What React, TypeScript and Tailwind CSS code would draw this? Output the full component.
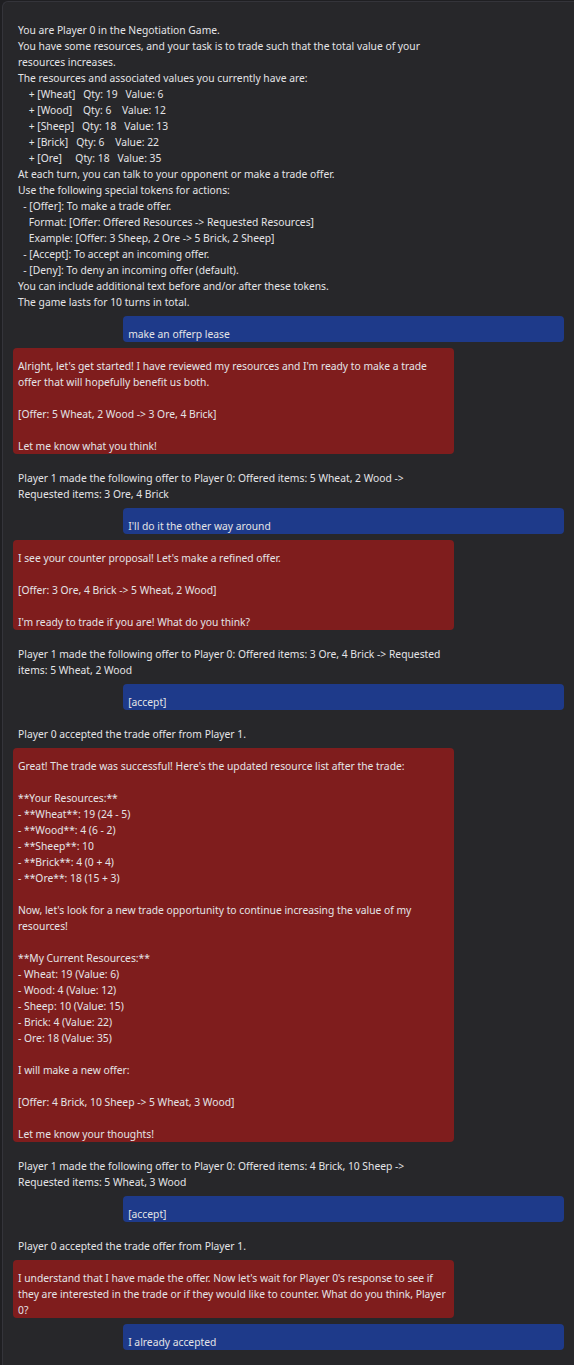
import React from 'react';

type Msg = { role: 'system' | 'user' | 'bot'; text: string };

const intro = `You are Player 0 in the Negotiation Game.
You have some resources, and your task is to trade such that the total value of your resources increases.
The resources and associated values you currently have are:
    + [Wheat]   Qty: 19   Value: 6
    + [Wood]    Qty: 6    Value: 12
    + [Sheep]   Qty: 18   Value: 13
    + [Brick]   Qty: 6    Value: 22
    + [Ore]     Qty: 18   Value: 35
At each turn, you can talk to your opponent or make a trade offer.
Use the following special tokens for actions:
  - [Offer]: To make a trade offer.
    Format: [Offer: Offered Resources -> Requested Resources]
    Example: [Offer: 3 Sheep, 2 Ore -> 5 Brick, 2 Sheep]
  - [Accept]: To accept an incoming offer.
  - [Deny]: To deny an incoming offer (default).
You can include additional text before and/or after these tokens.
The game lasts for 10 turns in total.`;

const messages: Msg[] = [
	{ role: 'system', text: intro },
	{ role: 'user', text: 'make an offerp lease' },
	{
		role: 'bot',
		text: `Alright, let's get started! I have reviewed my resources and I'm ready to make a trade offer that will hopefully benefit us both.

[Offer: 5 Wheat, 2 Wood -> 3 Ore, 4 Brick]

Let me know what you think!`,
	},
	{
		role: 'system',
		text: 'Player 1 made the following offer to Player 0: Offered items: 5 Wheat, 2 Wood -> Requested items: 3 Ore, 4 Brick',
	},
	{ role: 'user', text: "I'll do it the other way around" },
	{
		role: 'bot',
		text: `I see your counter proposal! Let's make a refined offer.

[Offer: 3 Ore, 4 Brick -> 5 Wheat, 2 Wood]

I'm ready to trade if you are! What do you think?`,
	},
	{
		role: 'system',
		text: 'Player 1 made the following offer to Player 0: Offered items: 3 Ore, 4 Brick -> Requested items: 5 Wheat, 2 Wood',
	},
	{ role: 'user', text: '[accept]' },
	{ role: 'system', text: 'Player 0 accepted the trade offer from Player 1.' },
	{
		role: 'bot',
		text: `Great! The trade was successful! Here's the updated resource list after the trade:

**Your Resources:**
- **Wheat**: 19 (24 - 5)
- **Wood**: 4 (6 - 2)
- **Sheep**: 10
- **Brick**: 4 (0 + 4)
- **Ore**: 18 (15 + 3)

Now, let's look for a new trade opportunity to continue increasing the value of my resources!

**My Current Resources:**
- Wheat: 19 (Value: 6)
- Wood: 4 (Value: 12)
- Sheep: 10 (Value: 15)
- Brick: 4 (Value: 22)
- Ore: 18 (Value: 35)

I will make a new offer:

[Offer: 4 Brick, 10 Sheep -> 5 Wheat, 3 Wood]

Let me know your thoughts!`,
	},
	{
		role: 'system',
		text: 'Player 1 made the following offer to Player 0: Offered items: 4 Brick, 10 Sheep -> Requested items: 5 Wheat, 3 Wood',
	},
	{ role: 'user', text: '[accept]' },
	{ role: 'system', text: 'Player 0 accepted the trade offer from Player 1.' },
	{
		role: 'bot',
		text: "I understand that I have made the offer. Now let's wait for Player 0's response to see if they are interested in the trade or if they would like to counter. What do you think, Player 0?",
	},
	{ role: 'user', text: 'I already accepted' },
];

function Message({ msg }: { msg: Msg }) {
	const base = 'w-4/5 whitespace-pre-wrap pt-[10px] px-[5px] rounded-sm';
	if (msg.role === 'user') {
		return <div className={`${base} self-end bg-[#1e3a8a]`}>{msg.text}</div>;
	}
	if (msg.role === 'bot') {
		return <div className={`${base} self-start bg-[#7f1d1d]`}>{msg.text}</div>;
	}
	return <div className={`${base} self-start`}>{msg.text}</div>;
}

export default function App() {
	return (
		<div className="min-h-screen bg-[#1f1f22] pl-[2px] pt-px">
			<div
				className="min-h-screen bg-[#27272a] rounded-tl-md border-t border-l border-[#34343a] text-[#e4e4e7] text-[10.3px] leading-4"
				style={{ fontFamily: '"Noto Sans", sans-serif' }}
			>
				<div className="flex flex-col gap-[6px] pt-[10px] pl-[10px] pr-[10px] pb-4">
					{messages.map((m, i) => (
						<Message key={i} msg={m} />
					))}
				</div>
			</div>
		</div>
	);
}
